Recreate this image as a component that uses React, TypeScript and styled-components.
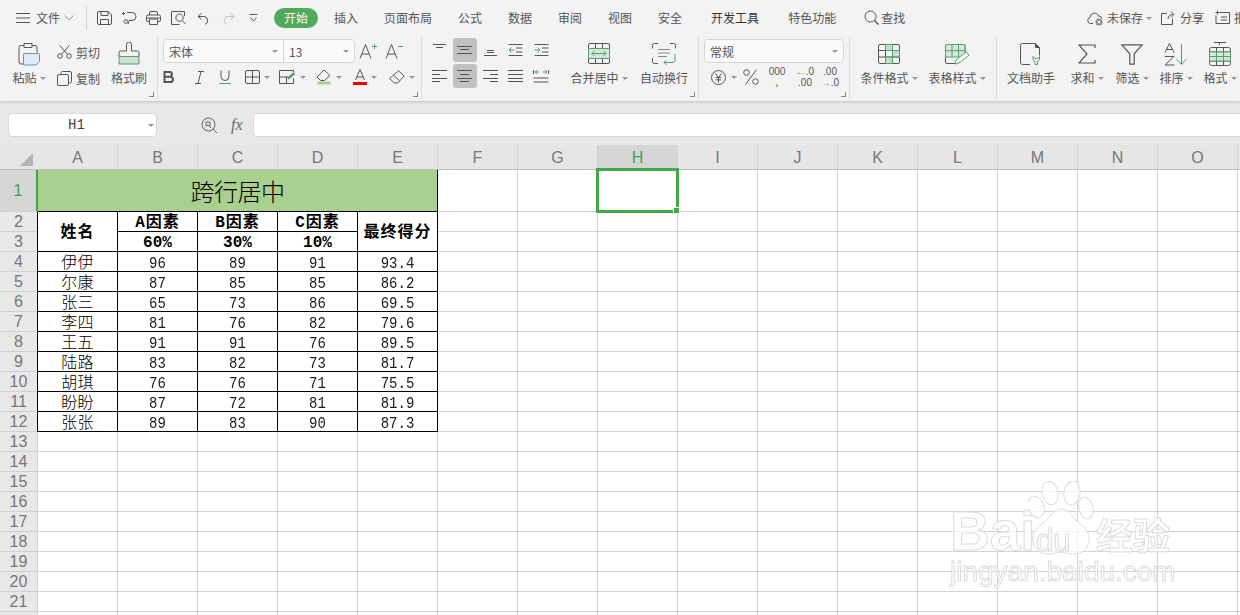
import styled, { createGlobalStyle } from 'styled-components';

const UI_FONT = '"Noto Sans CJK SC", "Noto Sans", sans-serif';
const CELL_FONT = '"Liberation Mono", "Noto Sans CJK SC", monospace';
const INK = '#555';
const GREEN = '#55a06d';

const Global = createGlobalStyle`
  html, body { margin: 0; padding: 0; height: 615px; overflow: hidden; background: #fff; }
  body { font-family: ${UI_FONT}; font-size: 12px; color: ${INK}; }
  svg { display: block; flex: none; }
`;

const Page = styled.div`
  width: 1240px;
  height: 615px;
  overflow: hidden;
  position: relative;
  display: flex;
  flex-direction: column;
`;

/* ---------- ribbon ---------- */
const Ribbon = styled.div`
  height: 101px;
  flex: none;
  background: #f3f3f3;
  box-shadow: 0 1px 3px rgba(0, 0, 0, 0.16);
  position: relative;
  z-index: 2;
`;
const TabBar = styled.div`
  height: 36px;
  display: flex;
  align-items: center;
  padding-left: 16px;
`;
const FileLabel = styled.span`
  margin-left: 6px;
  margin-top: -2px;
  width: 24px;
  color: #555;
`;
const BarDivider = styled.div`
  width: 1px;
  height: 24px;
  background: #d2d2d2;
  margin: 0 5px 0 8px;
`;
const QuickSlot = styled.div<{ $w?: number; $ml?: number }>`
  width: ${(p) => p.$w ?? 25}px;
  margin-left: ${(p) => p.$ml ?? 0}px;
  display: flex;
  justify-content: center;
`;
const ActivePill = styled.div`
  margin-left: 8px;
  width: 44px;
  height: 20px;
  padding-bottom: 2px;
  box-sizing: border-box;
  border-radius: 10px;
  background: #4faa5a;
  color: #fff;
  display: flex;
  align-items: center;
  justify-content: center;
`;
const Tab = styled.span<{ $ml?: number; $dark?: boolean }>`
  margin-left: ${(p) => p.$ml ?? 26}px;
  margin-top: -2px;
  color: ${(p) => (p.$dark ? '#333' : '#555')};
  white-space: nowrap;
`;
const RightSide = styled.div`
  margin-left: auto;
  width: 153px;
  flex: none;
  display: flex;
  align-items: center;
  white-space: nowrap;
  overflow: hidden;
`;
const RightText = styled.span<{ $ml?: number }>`
  margin-left: ${(p) => p.$ml ?? 4}px;
  margin-top: -1px;
`;
const ToolRow = styled.div`
  height: 64px;
  display: flex;
`;
const Group = styled.div<{ $w: number; $last?: boolean }>`
  width: ${(p) => p.$w}px;
  flex: none;
  position: relative;
  padding-top: 2px;
  box-sizing: border-box;
  display: flex;
  border-right: ${(p) => (p.$last ? 'none' : '1px solid #dedede')};
`;
const Launcher = styled.i`
  position: absolute;
  right: 3px;
  bottom: 3px;
  width: 4px;
  height: 4px;
  border-right: 1px solid #888;
  border-bottom: 1px solid #888;
`;
const BigTool = styled.div<{ $w: number; $ml?: number }>`
  width: ${(p) => p.$w}px;
  margin-left: ${(p) => p.$ml ?? 0}px;
  margin-top: 1px;
  flex: none;
  display: flex;
  flex-direction: column;
  align-items: center;
`;
const BigIcon = styled.div`
  height: 30px;
  display: flex;
  align-items: center;
  justify-content: center;
`;
const BigLabel = styled.div`
  height: 18px;
  line-height: 18px;
  display: flex;
  align-items: center;
  white-space: nowrap;
`;
const Caret = styled.i<{ $ml?: number }>`
  display: inline-block;
  flex: none;
  margin-left: ${(p) => p.$ml ?? 3}px;
  width: 0;
  height: 0;
  border-left: 3px solid transparent;
  border-right: 3px solid transparent;
  border-top: 3px solid #999;
`;
const SmallStack = styled.div`
  margin-left: 10px;
  margin-top: 1px;
  width: 46px;
  display: flex;
  flex-direction: column;
`;
const SmallTool = styled.div`
  height: 26px;
  display: flex;
  align-items: center;
  gap: 4px;
  white-space: nowrap;
`;
const FontColumn = styled.div`
  display: flex;
  flex-direction: column;
`;
const ControlRow = styled.div`
  height: 26px;
  display: flex;
  align-items: center;
`;
const Combo = styled.div<{ $w: number; $ml?: number }>`
  width: ${(p) => p.$w}px;
  margin-left: ${(p) => p.$ml ?? 0}px;
  height: 24px;
  box-sizing: border-box;
  background: #fafafa;
  border: 1px solid #d6d6d6;
  border-radius: 4px;
  display: flex;
  align-items: center;
`;
const ComboPart = styled.div<{ $w?: number; $line?: boolean }>`
  width: ${(p) => (p.$w ? `${p.$w}px` : 'auto')};
  flex: ${(p) => (p.$w ? 'none' : 1)};
  height: 100%;
  display: flex;
  align-items: center;
  justify-content: space-between;
  padding: 0 5px;
  box-sizing: border-box;
  border-left: ${(p) => (p.$line ? '1px solid #d6d6d6' : 'none')};
`;
const Slot = styled.div<{ $w: number; $ml?: number; $on?: boolean }>`
  width: ${(p) => p.$w}px;
  margin-left: ${(p) => p.$ml ?? 0}px;
  height: 24px;
  flex: none;
  display: flex;
  align-items: center;
  justify-content: center;
  gap: 3px;
  border-radius: 3px;
  background: ${(p) => (p.$on ? '#c1c1c1' : 'transparent')};
`;
const AlignGrid = styled.div`
  width: 128px;
  margin-left: 5px;
  display: grid;
  grid-template-columns: repeat(5, 25.5px);
  grid-auto-rows: 24px;
  row-gap: 2px;
  flex: none;
`;
const NumText = styled.div`
  font: 10px/10px 'Liberation Sans', sans-serif;
  color: #555;
  display: flex;
  flex-direction: column;
  align-items: center;
  gap: 1px;
`;
const GreenMark = styled.span`
  color: ${GREEN};
  font-weight: bold;
`;

/* ---------- formula bar ---------- */
const FormulaBar = styled.div`
  height: 44px;
  flex: none;
  background: #e8e8e8;
  display: flex;
  align-items: center;
  padding: 4px 0 0 8px;
  box-sizing: border-box;
`;
const NameBox = styled.div`
  width: 149px;
  height: 24px;
  box-sizing: border-box;
  background: #fff;
  border: 1px solid #d8d8d8;
  border-radius: 4px;
  display: flex;
  align-items: center;
  padding: 0 2px 0 59px;
  justify-content: space-between;
  font: 14px ${CELL_FONT};
  color: #444;
`;
const Fx = styled.span`
  margin-left: 9px;
  width: 17px;
  font: italic 16px 'Liberation Serif', serif;
  color: #666;
`;
const FormulaInput = styled.div`
  margin-left: 5px;
  flex: 1;
  height: 24px;
  box-sizing: border-box;
  background: #fff;
  border: 1px solid #d8d8d8;
  border-right: none;
  border-radius: 4px 0 0 4px;
`;

/* ---------- sheet ---------- */
const Sheet = styled.div`
  position: relative;
  flex: 1;
  display: grid;
  grid-template-columns: 38px repeat(16, 80px);
  grid-template-rows: 25px 42px repeat(21, 20px);
  background: #fff;
  overflow: hidden;
`;
const Corner = styled.div`
  background: #e6e6e6;
  border-bottom: 1px solid #bcbcbc;
  box-sizing: border-box;
  display: flex;
  align-items: flex-end;
  justify-content: flex-end;
  padding: 0 5px 3px 0;
`;
const ColHead = styled.div<{ $on?: boolean }>`
  background: ${(p) => (p.$on ? '#d6d6d6' : '#e6e6e6')};
  color: ${(p) => (p.$on ? '#3fa34d' : '#777')};
  border-right: 1px solid #d2d2d2;
  border-bottom: 1px solid #bcbcbc;
  box-sizing: border-box;
  display: flex;
  align-items: center;
  justify-content: center;
  padding-top: 1px;
  font: 16px 'Liberation Sans', sans-serif;
`;
const RowHead = styled.div<{ $on?: boolean }>`
  background: ${(p) => (p.$on ? '#d6d6d6' : '#e8e8e8')};
  color: ${(p) => (p.$on ? '#3fa34d' : '#777')};
  border-right: ${(p) => (p.$on ? '2px solid #3fa34d' : '1px solid #d2d2d2')};
  border-bottom: 1px solid #cfcfcf;
  box-sizing: border-box;
  display: flex;
  align-items: center;
  justify-content: center;
  font: 16px 'Liberation Sans', sans-serif;
`;
const Cell = styled.div<{ $colSpan?: number; $rowSpan?: number; $border?: boolean; $first?: boolean }>`
  grid-column: span ${(p) => p.$colSpan ?? 1};
  grid-row: span ${(p) => p.$rowSpan ?? 1};
  box-sizing: border-box;
  border-right: 1px solid ${(p) => (p.$border ? '#000' : '#d4d4d4')};
  border-bottom: 1px solid ${(p) => (p.$border ? '#000' : '#d4d4d4')};
  box-shadow: ${(p) => (p.$first ? '-1px 0 0 #000' : 'none')};
  position: relative;
  display: flex;
  align-items: center;
  justify-content: center;
  white-space: nowrap;
  color: #000;
  font: 14px/18px ${CELL_FONT};
`;
const TitleCell = styled(Cell)`
  background: #a9d08e;
  font: 24px/30px ${UI_FONT};
  font-weight: 300;
  letter-spacing: -0.5px;
`;
const NameText = styled.span`
  display: inline-block;
  font: 300 16px/18px ${UI_FONT};
  letter-spacing: 0.3px;
  margin-top: -2px;
  height: 18px;
  overflow: visible;
`;
const HeadText = styled.span<{ $spaced?: boolean }>`
  font: bold 16px/18px ${CELL_FONT};
  margin-top: 3px;
  letter-spacing: ${(p) => (p.$spaced ? '1px' : '0')};
`;
const NumberText = styled.span`
  display: inline-block;
  margin-top: 3px;
  color: #1c1c1c;
  transform: scaleY(1.2);
`;
const Selection = styled.div`
  position: absolute;
  left: -2px;
  top: -2px;
  right: -2px;
  bottom: -2px;
  border: 3px solid #45a848;
  z-index: 1;
`;
const Handle = styled.i`
  position: absolute;
  right: -4px;
  bottom: -4px;
  width: 5px;
  height: 5px;
  background: #45a848;
  border: 1px solid #fff;
`;

/* ---------- watermark ---------- */
const Watermark = styled.div`
  position: absolute;
  left: 950px;
  top: 333px;
  width: 230px;
  pointer-events: none;
  z-index: 1;
  display: flex;
  flex-direction: column;
  filter: blur(0.35px);
`;
const WatermarkTop = styled.div`
  display: flex;
  align-items: flex-end;
  height: 74px;
`;
const ghost = `
  color: rgba(255, 255, 255, 0.72);
  -webkit-text-stroke: 1px #dcdcdc;
`;
const Bai = styled.span`
  ${ghost}
  font: bold 55px/55px 'Liberation Sans', sans-serif;
  margin-bottom: -7px;
  width: 78px;
`;
const PawBox = styled.div`
  position: relative;
  width: 66px;
  height: 74px;
  flex: none;
  margin-bottom: -3px;
`;
const Du = styled.span`
  ${ghost}
  position: absolute;
  left: 8px;
  bottom: -1px;
  font: 31px/31px 'Liberation Sans', sans-serif;
`;
const Jing = styled.span`
  ${ghost}
  font: bold 37px/37px ${UI_FONT};
  margin: 0 0 -1px 2px;
  white-space: nowrap;
`;
const Url = styled.div`
  ${ghost}
  font: 28px/30px 'Liberation Sans', sans-serif;
  margin-top: 5px;
  white-space: nowrap;
`;

/* ---------- icons ---------- */
type IconProps = { w: number; h: number; children: React.ReactNode; stroke?: string };
const Ico = ({ w, h, children, stroke = INK }: IconProps) => (
  <svg width={w} height={h} viewBox={`0 0 ${w} ${h}`} fill="none" stroke={stroke} strokeWidth="1">
    {children}
  </svg>
);

const Hamburger = () => (
  <Ico w={14} h={10}><path d="M0 .5h14M0 5h14M0 9.5h14" /></Ico>
);
const Chevron = () => (
  <Ico w={10} h={6} stroke="#999"><path d="M.5.5l4.5 4.5 4.5-4.5" /></Ico>
);
const SaveIcon = () => (
  <Ico w={15} h={14}><path d="M2 .5h9l3.5 3v8.5a1.500 1.500 0 0 1-1.500 1.500h-11a1.500 1.500 0 0 1-1.500-1.500v-10a1.500 1.500 0 0 1 1.500-1.500zM4 .5v4h7v-4M3.500 13.500v-5h8v5" /></Ico>
);
const SendIcon = () => (
  <Ico w={16} h={14}><path d="M6 1.500h5a4 4 0 0 1 0 8h-3l-1 3.500M1 2.500h3m-1.500-1.500v3M3 10.500a1.800 1.800 0 1 0 3.600 0a1.800 1.800 0 1 0-3.600 0" /></Ico>
);
const PrintIcon = () => (
  <Ico w={15} h={14}><path d="M3.500 4v-2a1.500 1.500 0 0 1 1.500-1.500h5a1.500 1.500 0 0 1 1.500 1.500v2M3 10.500h-1a1.500 1.500 0 0 1-1.500-1.500v-3.500a1.500 1.500 0 0 1 1.500-1.500h11a1.500 1.500 0 0 1 1.500 1.500v3.500a1.500 1.500 0 0 1-1.500 1.500h-1M3.500 8h8v5.500h-8zM.5 7h14" /></Ico>
);
const PreviewIcon = () => (
  <Ico w={16} h={14}><path d="M13.500 5v-4.500h-13v13h8M8.500 3a3.700 3.700 0 1 0 .01 0zM11 9.500l3.500 3.500" /></Ico>
);
const UndoIcon = ({ light }: { light?: boolean }) => (
  <Ico w={13} h={13} stroke={light ? '#c4c4c4' : INK}>
    {light ? (
      <path d="M8.500 1l3.500 3.500-3.500 3M12 4.500h-6a4 4 0 0 0-1 7.800" />
    ) : (
      <path d="M4.500 1l-3.500 3.500 3.500 3M1 4.500h6a4 4 0 0 1 1 7.800" />
    )}
  </Ico>
);
const MoreIcon = () => (
  <Ico w={9} h={8}><path d="M.5.500h8M1.500 3.500l3 3.500 3-3.500" /></Ico>
);
const SearchIcon = () => (
  <Ico w={15} h={15}><circle cx="6.500" cy="6.500" r="5.500" /><path d="M10.500 10.500l4 4" strokeWidth="1.500" /></Ico>
);
const CloudIcon = () => (
  <Ico w={17} h={15}>
    <path d="M6 12.500h-2.500a3 3 0 0 1-.5-5.900a4.500 4.500 0 0 1 8.700-1.500a3 3 0 0 1 3.300 2.500" />
    <circle cx="12" cy="11" r="3.500" fill="#888" stroke="none" />
    <path d="M10.500 9.500l3 3m0-3l-3 3" stroke="#fff" />
  </Ico>
);
const ShareIcon = () => (
  <Ico w={14} h={14}><path d="M6 2.500h-5.500v11h11v-6M7 8c0-3 2-4.500 5-4.500M10 .5l3 3-3 3" /></Ico>
);
const NoteIcon = () => (
  <Ico w={15} h={15}><path d="M5 2.500h9.500v11h-13.500v-8M2.500 .5v4M.5 2.500h4M6 7h6M6 10h6" /></Ico>
);
const PasteIcon = () => (
  <Ico w={24} h={24}>
    <path d="M7 3.500h-3a2 2 0 0 0-2 2v14.500a2 2 0 0 0 2 2h4M15 3.500h3a2 2 0 0 1 2 2v5M7 1.500h8v4h-8z" />
    <path d="M7.500 11.500h14a1 1 0 0 1 1 1v7l-3.500 3.500h-11.500a1 1 0 0 1-1-1v-9.500a1 1 0 0 1 1-1z" fill="#e2eaf6" stroke="#5f8fd0" />
  </Ico>
);
const ScissorsIcon = () => (
  <Ico w={15} h={14}>
    <circle cx="3" cy="11" r="2.300" />
    <circle cx="12" cy="11" r="2.300" />
    <path d="M4.500 9.300l8-9M10.500 9.300l-8-9" />
  </Ico>
);
const CopyIcon = () => (
  <Ico w={15} h={15}><path d="M4 2.500v-.5a1.500 1.500 0 0 1 1.500-1.500h7.500a1.500 1.500 0 0 1 1.500 1.500v8.500a1.500 1.500 0 0 1-1.500 1.500h-.5M2 3.500h8a1.500 1.500 0 0 1 1.500 1.500v8a1.500 1.500 0 0 1-1.500 1.500h-8a1.500 1.500 0 0 1-1.500-1.500v-8a1.500 1.500 0 0 1 1.500-1.500z" /></Ico>
);
const BrushIcon = () => (
  <Ico w={22} h={24}>
    <path d="M8.500 9v-6.500a2.500 2.500 0 0 1 5 0v6.500h6a1.500 1.500 0 0 1 1.500 1.500v4h-20v-4a1.500 1.500 0 0 1 1.500-1.500z" />
    <path d="M1 14.500h20v7.500h-20z" fill="#cfe2d4" stroke={GREEN} />
  </Ico>
);
const BoldIcon = () => (
  <Ico w={11} h={12}><path d="M1.500 1h5a2.400 2.400 0 0 1 0 4.800h-5zM1.500 5.800h5.800a2.600 2.600 0 0 1 0 5.200h-5.800z" strokeWidth="2" /></Ico>
);
const ItalicIcon = () => (
  <Ico w={9} h={13}><path d="M3 .5h6M0 12.500h6M6 .5l-3 12" /></Ico>
);
const UnderlineIcon = () => (
  <Ico w={12} h={14}>
    <path d="M2 .5v6a4 4 0 0 0 8 0v-6" />
    <path d="M0 13.500h12" stroke={GREEN} />
  </Ico>
);
const BordersIcon = () => (
  <Ico w={15} h={14}><rect x=".5" y=".5" width="14" height="13" rx="1.500" /><path d="M7.500 .5v13M.5 7h14" /></Ico>
);
const CellStyleIcon = () => (
  <Ico w={17} h={14}>
    <path d="M14.500 2v-1.500h-14v13h14v-5M.5 7h9M7.500 7v6.500" />
    <path d="M9 8.500l6.500-5.500" stroke={GREEN} strokeWidth="2.500" />
  </Ico>
);
const FillIcon = () => (
  <Ico w={16} h={16}>
    <path d="M8 1l6 5.500-5.500 5h-4l-3.500-3.500z" />
    <path d="M1.500 12.500h13v3h-13z" fill="#a9d08e" stroke="none" />
  </Ico>
);
const FontColorIcon = () => (
  <Ico w={14} h={16}>
    <path d="M2.500 11l4.500-10.500 4.500 10.500M4 8h6" />
    <path d="M0 13h14v3h-14z" fill="#f00000" stroke="none" />
  </Ico>
);
const EraserIcon = () => (
  <Ico w={16} h={14}>
    <path d="M9.500 .8l5.700 5.200-6.500 7h-3.500l-4.500-4.500zM4.800 5.300l5.700 5.500" />
  </Ico>
);
const GrowIcon = ({ plus }: { plus?: boolean }) => (
  <Ico w={19} h={16}>
    <path d="M1 15.500l5.500-14 5.500 14M3 11h7" />
    {plus ? <path d="M13 3.500h5M15.500 1v5" stroke={GREEN} /> : <path d="M13 3.500h5" stroke={GREEN} />}
  </Ico>
);
const Lines = ({ rows, w = 15 }: { rows: [number, number, number][]; w?: number }) => (
  <Ico w={w} h={14}>
    {rows.map(([x, y, l], i) => (
      <path key={i} d={`M${x} ${y + 0.5}h${l}`} />
    ))}
  </Ico>
);
const IndentIcon = ({ right }: { right?: boolean }) => (
  <Ico w={15} h={14}>
    <path d="M.5 1.500h14M8 5h6.500M8 9h6.500M.5 12.500h14" />
    <path d={right ? 'M.5 7h5.500M3.500 4.500l2.500 2.500-2.500 2.500' : 'M1 7h5.500M3.500 4.500l-2.500 2.500 2.500 2.500'} stroke={GREEN} />
  </Ico>
);
const DistributeIcon = () => (
  <Ico w={16} h={14}>
    <path d="M.5 1v4M15.500 1v4M.5 9h15M.5 13h15" />
    <path d="M2 3h4.500M4 1l-2 2 2 2M9.500 3h4.500M12 1l2 2-2 2" stroke={GREEN} />
  </Ico>
);
const MergeIcon = () => (
  <Ico w={22} h={22}>
    <rect x=".5" y=".5" width="21" height="20" rx="1.500" />
    <path d="M7.500 .5v5M14.500 .5v5M7.500 15.500v5M14.500 15.500v5" />
    <path d="M.5 5.500h21v10h-21z" fill="#d6e7da" stroke={GREEN} />
    <path d="M4 10.500h14M6.500 8l-2.500 2.500 2.500 2.500M15.500 8l2.500 2.500-2.500 2.500" stroke={GREEN} />
  </Ico>
);
const WrapIcon = () => (
  <Ico w={24} h={22}>
    <path d="M6 .5h-3.500a2 2 0 0 0-2 2v3M18 .5h3.500a2 2 0 0 1 2 2v3M.5 15v3.500a2 2 0 0 0 2 2h3.500" />
    <path d="M6 6.500h12M6 10h12M6 13.500h9" stroke="#888" />
    <path d="M23 11v6.500a2 2 0 0 1-2 2h-9M14.500 17l-2.500 2.500 2.500 2.500" stroke={GREEN} />
  </Ico>
);
const YuanIcon = () => (
  <Ico w={15} h={15}>
    <circle cx="7.500" cy="7.500" r="7" />
    <path d="M4.500 3.500l3 4 3-4M7.500 7.500v5M4.800 7.500h5.400M4.800 9.800h5.400" />
  </Ico>
);
const PercentIcon = () => (
  <Ico w={16} h={16}>
    <circle cx="3.500" cy="3.500" r="2.800" />
    <circle cx="12.500" cy="12.500" r="2.800" />
    <path d="M13.500 .5l-11 15" />
  </Ico>
);
const CondIcon = () => (
  <Ico w={22} h={20}>
    <rect x=".5" y=".5" width="21" height="19" rx="1.500" />
    <path d="M.5 6.500h21M.5 13h21M7.500 .5v19M14.500 .5v19" />
    <path d="M7.500 .5h7v6h7v6.500h-7v6.500h-7v-6.500h7v-6.500h-7z" fill="#8fc3a1" fillOpacity=".45" stroke={GREEN} />
  </Ico>
);
const TableStyleIcon = () => (
  <Ico w={25} h={21}>
    <path d="M12 19.500h-10a1.500 1.500 0 0 1-1.500-1.500v-16a1.500 1.500 0 0 1 1.500-1.500h16.500a1.500 1.500 0 0 1 1.500 1.500v8" />
    <path d="M.5 2a1.500 1.500 0 0 1 1.500-1.500h16.500a1.500 1.500 0 0 1 1.500 1.500v11h-19.500zM.5 6.700h19.500M7 .5v12.500M13.500 .5v12.500" fill="#d6e7da" stroke={GREEN} />
    <path d="M10 20l1-4 10-8 3 3-10 8z" fill="#fff" stroke={GREEN} />
  </Ico>
);
const DocHelperIcon = () => (
  <Ico w={22} h={23}>
    <path d="M10 21.500h-7.500a2 2 0 0 1-2-2v-17a2 2 0 0 1 2-2h13l4 4v8" />
    <path d="M15.500 .5v4h4" fill="#555" />
    <path d="M13 13.500v2.500a2.800 2.800 0 0 0 2 2.500v3h2.500v-3a2.800 2.800 0 0 0 2-2.500v-2.500l-1.500 2h-3z" stroke={GREEN} />
  </Ico>
);
const SigmaIcon = () => (
  <Ico w={18} h={20}><path d="M17 4v-3h-16l8 9-8 9h16v-3" strokeWidth="1.200" /></Ico>
);
const FunnelIcon = () => (
  <Ico w={22} h={21}><path d="M.8.8h20.400l-8 9v10.400h-4.400v-10.400z" strokeWidth="1.200" /></Ico>
);
const SortIcon = () => (
  <Ico w={24} h={23}>
    <path d="M1 9.500l4.500-9 4.500 9M2.800 6.500h5.400M1 13.500h9l-9 8.500h9.500" />
    <path d="M17.500 1v20M12.500 16l5 5.500 5-5.500" stroke={GREEN} />
  </Ico>
);
const FormatIcon = () => (
  <Ico w={22} h={24}>
    <path d="M5 .5h12" />
    <path d="M10.500 .5v2.500" />
    <rect x=".5" y="5.500" width="21" height="18" rx="2" />
    <path d="M.5 10h21M.5 19h21M7.500 5.500v18M14.500 5.500v18" />
    <path d="M.5 10h21v9h-21z" fill="#d6e7da" stroke={GREEN} />
    <path d="M.5 14.500h21M7.500 10v9M14.500 10v9" stroke={GREEN} />
  </Ico>
);
const LensIcon = () => (
  <Ico w={17} h={17}>
    <circle cx="7.500" cy="7.500" r="6.500" stroke="#666" />
    <path d="M5 8.500v-3.500h4v3.500h-4M8 8.500l2 2.500M12 12l4 4" stroke="#666" />
  </Ico>
);
const CornerMark = () => (
  <svg width="13" height="13" viewBox="0 0 13 13"><path d="M13 0v13h-13z" fill="#b5b5b5" /></svg>
);

/* ---------- data ---------- */
const COLS = 'ABCDEFGHIJKLMNOP'.split('');
const SCORES: [string, string, string, string, string][] = [
  ['伊伊', '96', '89', '91', '93.4'],
  ['尔康', '87', '85', '85', '86.2'],
  ['张三', '65', '73', '86', '69.5'],
  ['李四', '81', '76', '82', '79.6'],
  ['王五', '91', '91', '76', '89.5'],
  ['陆路', '83', '82', '73', '81.7'],
  ['胡琪', '76', '76', '71', '75.5'],
  ['盼盼', '87', '72', '81', '81.9'],
  ['张张', '89', '83', '90', '87.3'],
];
const emptyCells = (n: number, prefix: string) =>
  Array.from({ length: n }, (_, i) => <Cell key={`${prefix}-${i}`} />);

const Toolbar = () => (
  <Ribbon>
    <TabBar>
      <Hamburger />
      <FileLabel>文件</FileLabel>
      <QuickSlot $w={18}><Chevron /></QuickSlot>
      <BarDivider />
      <QuickSlot $w={24}><SaveIcon /></QuickSlot>
      <QuickSlot><SendIcon /></QuickSlot>
      <QuickSlot><PrintIcon /></QuickSlot>
      <QuickSlot><PreviewIcon /></QuickSlot>
      <QuickSlot><UndoIcon /></QuickSlot>
      <QuickSlot><UndoIcon light /></QuickSlot>
      <QuickSlot><MoreIcon /></QuickSlot>
      <ActivePill>开始</ActivePill>
      <Tab $ml={16}>插入</Tab>
      <Tab>页面布局</Tab>
      <Tab>公式</Tab>
      <Tab>数据</Tab>
      <Tab>审阅</Tab>
      <Tab>视图</Tab>
      <Tab>安全</Tab>
      <Tab $ml={29} $dark>开发工具</Tab>
      <Tab $ml={29}>特色功能</Tab>
      <Tab $ml={28}><SearchIcon /></Tab>
      <Tab $ml={2}>查找</Tab>
      <RightSide>
        <CloudIcon />
        <RightText $ml={3}>未保存</RightText>
        <Caret />
        <RightText $ml={9}><ShareIcon /></RightText>
        <RightText $ml={5}>分享</RightText>
        <RightText $ml={11}><NoteIcon /></RightText>
        <RightText>批注</RightText>
      </RightSide>
    </TabBar>
    <ToolRow>
      <Group $w={158}>
        <BigTool $w={36} $ml={11}>
          <BigIcon><PasteIcon /></BigIcon>
          <BigLabel>粘贴<Caret /></BigLabel>
        </BigTool>
        <SmallStack>
          <SmallTool><ScissorsIcon />剪切</SmallTool>
          <SmallTool><CopyIcon />复制</SmallTool>
        </SmallStack>
        <BigTool $w={36} $ml={8}>
          <BigIcon><BrushIcon /></BigIcon>
          <BigLabel>格式刷</BigLabel>
        </BigTool>
        <Launcher />
      </Group>
      <Group $w={264}>
        <FontColumn>
          <ControlRow>
            <Combo $w={192} $ml={5}>
              <ComboPart>宋体<Caret /></ComboPart>
              <ComboPart $w={71} $line>13<Caret /></ComboPart>
            </Combo>
            <Slot $w={20} $ml={3}><GrowIcon plus /></Slot>
            <Slot $w={20} $ml={6}><GrowIcon /></Slot>
          </ControlRow>
          <ControlRow>
            <Slot $w={20}><BoldIcon /></Slot>
            <Slot $w={20} $ml={11}><ItalicIcon /></Slot>
            <Slot $w={20} $ml={6}><UnderlineIcon /></Slot>
            <Slot $w={26} $ml={9}><BordersIcon /><Caret $ml={1} /></Slot>
            <Slot $w={28} $ml={8}><CellStyleIcon /><Caret $ml={1} /></Slot>
            <Slot $w={26} $ml={10}><FillIcon /><Caret $ml={1} /></Slot>
            <Slot $w={26} $ml={10}><FontColorIcon /><Caret $ml={1} /></Slot>
            <Slot $w={26} $ml={11}><EraserIcon /><Caret $ml={1} /></Slot>
          </ControlRow>
        </FontColumn>
        <Launcher />
      </Group>
      <Group $w={277}>
        <AlignGrid>
          <Slot $w={24}><Lines rows={[[1, 1, 13], [4, 4, 7]]} /></Slot>
          <Slot $w={24} $on><Lines rows={[[0, 3, 15], [3, 6, 9], [0, 10, 15]]} /></Slot>
          <Slot $w={24}><Lines rows={[[4, 7, 7], [4, 9, 7], [1, 12, 13]]} /></Slot>
          <Slot $w={24}><IndentIcon /></Slot>
          <Slot $w={24}><IndentIcon right /></Slot>
          <Slot $w={24}><Lines rows={[[0, 1, 15], [0, 5, 8], [0, 9, 15], [0, 12, 8]]} /></Slot>
          <Slot $w={24} $on><Lines rows={[[0, 1, 15], [3, 5, 9], [0, 9, 15], [3, 12, 9]]} /></Slot>
          <Slot $w={24}><Lines rows={[[0, 1, 15], [7, 5, 8], [0, 9, 15], [7, 12, 8]]} /></Slot>
          <Slot $w={24}><Lines rows={[[0, 1, 15], [0, 5, 15], [0, 9, 15], [0, 12, 15]]} /></Slot>
          <Slot $w={24}><DistributeIcon /></Slot>
        </AlignGrid>
        <BigTool $w={60} $ml={14}>
          <BigIcon><MergeIcon /></BigIcon>
          <BigLabel>合并居中<Caret /></BigLabel>
        </BigTool>
        <BigTool $w={50} $ml={10}>
          <BigIcon><WrapIcon /></BigIcon>
          <BigLabel>自动换行</BigLabel>
        </BigTool>
        <Launcher />
      </Group>
      <Group $w={151}>
        <FontColumn>
          <ControlRow>
            <Combo $w={140} $ml={5}>
              <ComboPart>常规<Caret /></ComboPart>
            </Combo>
          </ControlRow>
          <ControlRow>
            <Slot $w={30} $ml={10}><YuanIcon /><Caret $ml={2} /></Slot>
            <Slot $w={20} $ml={2}><PercentIcon /></Slot>
            <Slot $w={20} $ml={6}>
              <NumText>000<GreenMark>,</GreenMark></NumText>
            </Slot>
            <Slot $w={24} $ml={6}>
              <NumText><span><GreenMark>←</GreenMark>.0</span><span>.00</span></NumText>
            </Slot>
            <Slot $w={24} $ml={1}>
              <NumText><span>.00</span><span><GreenMark>→</GreenMark>.0</span></NumText>
            </Slot>
          </ControlRow>
        </FontColumn>
        <Launcher />
      </Group>
      <Group $w={147}>
        <BigTool $w={58} $ml={10}>
          <BigIcon><CondIcon /></BigIcon>
          <BigLabel>条件格式<Caret /></BigLabel>
        </BigTool>
        <BigTool $w={58} $ml={10}>
          <BigIcon><TableStyleIcon /></BigIcon>
          <BigLabel>表格样式<Caret /></BigLabel>
        </BigTool>
      </Group>
      <Group $w={243} $last>
        <BigTool $w={48} $ml={10}>
          <BigIcon><DocHelperIcon /></BigIcon>
          <BigLabel>文档助手</BigLabel>
        </BigTool>
        <BigTool $w={34} $ml={15}>
          <BigIcon><SigmaIcon /></BigIcon>
          <BigLabel>求和<Caret /></BigLabel>
        </BigTool>
        <BigTool $w={34} $ml={11}>
          <BigIcon><FunnelIcon /></BigIcon>
          <BigLabel>筛选<Caret /></BigLabel>
        </BigTool>
        <BigTool $w={34} $ml={10}>
          <BigIcon><SortIcon /></BigIcon>
          <BigLabel>排序<Caret /></BigLabel>
        </BigTool>
        <BigTool $w={34} $ml={10}>
          <BigIcon><FormatIcon /></BigIcon>
          <BigLabel>格式<Caret /></BigLabel>
        </BigTool>
      </Group>
    </ToolRow>
  </Ribbon>
);

export default function App() {
  return (
    <Page>
      <Global />
      <Toolbar />
      <FormulaBar>
        <NameBox>H1<Caret /></NameBox>
        <QuickSlot $w={25} $ml={40}><LensIcon /></QuickSlot>
        <Fx>fx</Fx>
        <FormulaInput />
      </FormulaBar>
      <Sheet>
        <Corner><CornerMark /></Corner>
        {COLS.map((c) => (
          <ColHead key={c} $on={c === 'H'}>{c === 'P' ? '' : c}</ColHead>
        ))}

        <RowHead $on>1</RowHead>
        <TitleCell $colSpan={5} $border>跨行居中</TitleCell>
        {emptyCells(2, 'r1a')}
        <Cell>
          <Selection><Handle /></Selection>
        </Cell>
        {emptyCells(8, 'r1b')}

        <RowHead>2</RowHead>
        <Cell $rowSpan={2} $border $first><HeadText $spaced>姓名</HeadText></Cell>
        <Cell $border><HeadText $spaced>A因素</HeadText></Cell>
        <Cell $border><HeadText $spaced>B因素</HeadText></Cell>
        <Cell $border><HeadText $spaced>C因素</HeadText></Cell>
        <Cell $rowSpan={2} $border><HeadText $spaced>最终得分</HeadText></Cell>
        {emptyCells(11, 'r2')}

        <RowHead>3</RowHead>
        <Cell $border><HeadText>60%</HeadText></Cell>
        <Cell $border><HeadText>30%</HeadText></Cell>
        <Cell $border><HeadText>10%</HeadText></Cell>
        {emptyCells(11, 'r3')}

        {SCORES.map(([name, a, b, c, total], i) => (
          <Row key={name} index={i + 4} name={name} values={[a, b, c, total]} />
        ))}

        {Array.from({ length: 10 }, (_, i) => (
          <Blank key={i} index={i + 13} />
        ))}
        <Watermark>
          <WatermarkTop>
            <Bai>Bai</Bai>
            <PawBox>
              <svg width="66" height="74" viewBox="0 0 66 74" fill="rgba(255,255,255,.72)" stroke="#dcdcdc">
                <ellipse cx="8" cy="26" rx="8" ry="11" transform="rotate(-20 8 26)" />
                <ellipse cx="22" cy="12" rx="8" ry="12" transform="rotate(-12 22 12)" />
                <ellipse cx="44" cy="12" rx="8" ry="12" transform="rotate(8 44 12)" />
                <ellipse cx="58" cy="27" rx="7" ry="11" transform="rotate(-15 58 27)" />
                <path d="M33 28c-8 0-10 8-17 13c-8 6-12 11-11 19c1 9 8 13 16 13c5 0 8-2 12-2c4 0 7 2 12 2c8 0 15-4 16-13c1-8-3-13-11-19c-7-5-9-13-17-13z" />
              </svg>
              <Du>du</Du>
            </PawBox>
            <Jing>经验</Jing>
          </WatermarkTop>
          <Url>jingyan.baidu.com</Url>
        </Watermark>
      </Sheet>
    </Page>
  );
}

function Row({ index, name, values }: { index: number; name: string; values: string[] }) {
  return (
    <>
      <RowHead>{index}</RowHead>
      <Cell $border $first><NameText>{name}</NameText></Cell>
      {values.map((v, i) => (
        <Cell key={i} $border><NumberText>{v}</NumberText></Cell>
      ))}
      {emptyCells(11, `r${index}`)}
    </>
  );
}

function Blank({ index }: { index: number }) {
  return (
    <>
      <RowHead>{index}</RowHead>
      {emptyCells(16, `b${index}`)}
    </>
  );
}
